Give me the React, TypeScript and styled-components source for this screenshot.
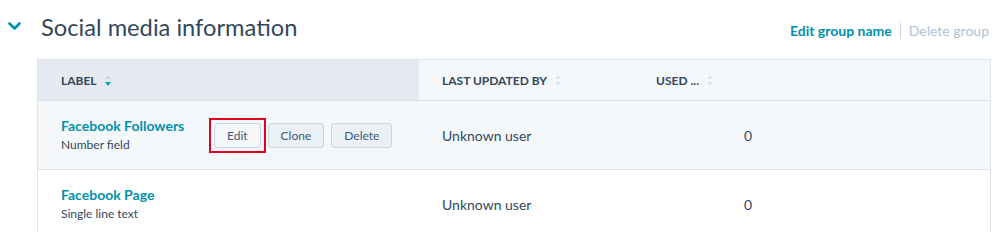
import React from "react";
import styled, { createGlobalStyle } from "styled-components";

const GlobalStyle = createGlobalStyle`
  body {
    margin: 0;
    background: #ffffff;
    font-family: Lato, "Open Sans", sans-serif;
    color: #33475b;
  }
`;

const Page = styled.div`
  width: 1000px;
  height: 232px;
  overflow: hidden;
`;

const GroupHeader = styled.div`
  display: flex;
  align-items: center;
  justify-content: space-between;
  height: 59px;
  padding: 0 11px 0 8px;
  box-sizing: border-box;
`;

const TitleWrap = styled.div`
  display: flex;
  align-items: center;
  gap: 20px;
  margin-top: -6px;
`;

const Title = styled.h2`
  margin: 0;
  font-size: 23.7px;
  font-weight: 400;
  color: #33475b;
`;

const GroupActions = styled.div`
  display: flex;
  align-items: center;
  gap: 8px;
  font-size: 14px;
  margin-top: 2px;
`;

const ActionLink = styled.span<{ $muted?: boolean }>`
  color: ${(p) => (p.$muted ? "#b0c1d4" : "#0091ae")};
  font-weight: ${(p) => (p.$muted ? 400 : 700)};
`;

const Divider = styled.span`
  width: 1px;
  height: 16px;
  background: #cbd6e2;
`;

const Table = styled.div`
  margin-left: 37px;
  width: 952px;
  border: 1px solid #dfe3eb;
  border-bottom: none;
`;

const Grid = styled.div<{ $height: number; $bg: string }>`
  display: grid;
  grid-template-columns: 381px 214px 144px 1fr;
  height: ${(p) => p.$height}px;
  background: ${(p) => p.$bg};
  border-bottom: 1px solid #dfe3eb;
`;

const HeadCell = styled.div<{ $active?: boolean }>`
  display: flex;
  align-items: center;
  gap: 7px;
  padding-left: 23px;
  font-size: 12px;
  font-weight: 700;
  color: #33475b;
  background: ${(p) => (p.$active ? "#e5eaf1" : "transparent")};
`;

const Cell = styled.div<{ $right?: boolean }>`
  display: flex;
  align-items: center;
  padding: 0 23px;
  font-size: 14px;
  color: #33475b;
  justify-content: ${(p) => (p.$right ? "flex-end" : "flex-start")};
  padding-right: ${(p) => (p.$right ? 25 : 23)}px;
`;

const LabelCell = styled.div`
  display: flex;
  align-items: center;
  padding-left: 23px;
`;

const LabelText = styled.div`
  display: flex;
  flex-direction: column;
  gap: 3px;
  width: 153px;
  margin-top: -2px;
`;

const PropName = styled.span`
  color: #0091ae;
  font-size: 14px;
  font-weight: 700;
`;

const PropType = styled.span`
  font-size: 12px;
  color: #33475b;
`;

const Buttons = styled.div`
  display: flex;
  gap: 7px;
  align-items: center;
`;

const Highlight = styled.div`
  position: relative;
  outline: 2px solid #e2001a;
  outline-offset: 3px;
`;

const SmallButton = styled.button<{ $light?: boolean }>`
  height: 25px;
  padding: 0 12px;
  font-family: inherit;
  font-size: 12px;
  color: #425b76;
  background: ${(p) => (p.$light ? "#f5f8fa" : "#eaf0f6")};
  border: 1px solid #cbd6e2;
  border-radius: 3px;
  display: flex;
  align-items: center;
`;

const SortIcon = ({ active }: { active?: boolean }) => (
  <svg width="8" height="13" viewBox="0 0 8 13">
    <path d="M4 1 L7 5 H1 Z" fill={active ? "#cbd6e2" : "#dfe3eb"} />
    <path d="M4 12 L7 8 H1 Z" fill={active ? "#00a4bd" : "#dfe3eb"} />
  </svg>
);

const Chevron = () => (
  <svg width="13" height="9" viewBox="0 0 13 9">
    <path
      d="M1.5 1.5 L6.5 6.5 L11.5 1.5"
      stroke="#0091ae"
      strokeWidth="2.6"
      fill="none"
      strokeLinecap="round"
      strokeLinejoin="round"
    />
  </svg>
);

const rows = [
  { name: "Facebook Followers", type: "Number field", user: "Unknown user", used: "0", hover: true },
  { name: "Facebook Page", type: "Single line text", user: "Unknown user", used: "0", hover: false },
];

export default function App() {
  return (
    <Page>
      <GlobalStyle />
      <GroupHeader>
        <TitleWrap>
          <Chevron />
          <Title>Social media information</Title>
        </TitleWrap>
        <GroupActions>
          <ActionLink>Edit group name</ActionLink>
          <Divider />
          <ActionLink $muted>Delete group</ActionLink>
        </GroupActions>
      </GroupHeader>
      <Table>
        <Grid $height={40} $bg="#f5f8fa">
          <HeadCell $active>
            LABEL <SortIcon active />
          </HeadCell>
          <HeadCell>
            LAST UPDATED BY <SortIcon />
          </HeadCell>
          <HeadCell>
            USED ... <SortIcon />
          </HeadCell>
          <div />
        </Grid>
        {rows.map((r) => (
          <Grid key={r.name} $height={68} $bg={r.hover ? "#f5f8fa" : "#ffffff"}>
            <LabelCell>
              <LabelText>
                <PropName>{r.name}</PropName>
                <PropType>{r.type}</PropType>
              </LabelText>
              {r.hover && (
                <Buttons>
                  <Highlight>
                    <SmallButton $light>Edit</SmallButton>
                  </Highlight>
                  <SmallButton>Clone</SmallButton>
                  <SmallButton>Delete</SmallButton>
                </Buttons>
              )}
            </LabelCell>
            <Cell>{r.user}</Cell>
            <Cell $right>{r.used}</Cell>
            <div />
          </Grid>
        ))}
      </Table>
    </Page>
  );
}
